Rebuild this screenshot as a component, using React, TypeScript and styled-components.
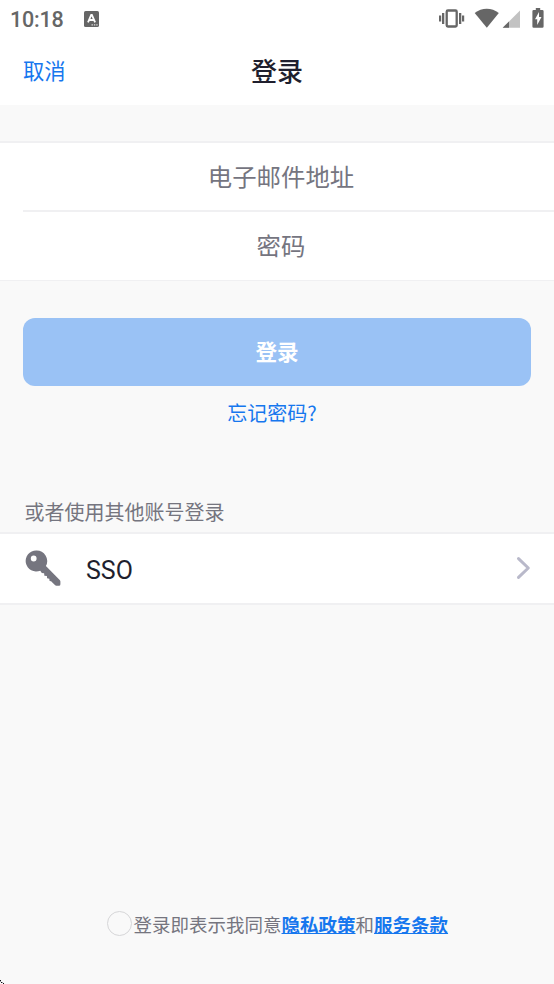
import * as React from 'react'
import styled, { createGlobalStyle } from 'styled-components'

const colors = {
  blue: '#1677ee',
  blueDisabled: '#9ac2f5',
  background: '#f9f9f9',
  border: '#f0f0f2',
  text: '#1f1f2e',
  textLight: '#75757f',
  status: '#666666',
}

const GlobalStyle = createGlobalStyle`
  body {
    margin: 0;
    background: ${colors.background};
    font-family: Roboto, 'Noto Sans CJK SC', sans-serif;
  }
  * {
    box-sizing: border-box;
  }
`

const Screen = styled.div`
  position: relative;
  display: flex;
  flex-direction: column;
  width: 100%;
  height: 984px;
  overflow: hidden;
  background: ${colors.background};
`

const StatusBar = styled.div`
  display: flex;
  align-items: center;
  height: 38px;
  padding: 0 10px 0 9px;
  background: #fff;
  color: ${colors.status};
`

const Clock = styled.span`
  width: 75px;
  padding: 2px 0 0 1px;
  font-size: 21.5px;
  font-weight: 500;
  line-height: 26px;
  letter-spacing: -0.2px;
`

const StatusIcons = styled.div`
  display: flex;
  margin-left: auto;
  padding-bottom: 2px;
`

const Header = styled.header`
  display: grid;
  grid-template-columns: 1fr auto 1fr;
  align-items: center;
  height: 67px;
  padding: 0 23px;
  background: #fff;
`

const CancelButton = styled.button`
  justify-self: start;
  padding: 0;
  border: 0;
  background: none;
  color: ${colors.blue};
  font-family: inherit;
  font-size: 21.3px;
  line-height: 30px;
`

const Title = styled.h1`
  margin: 0;
  color: ${colors.text};
  font-size: 26px;
  font-weight: 500;
  line-height: 36px;
`

const Fields = styled.div`
  margin-top: 36px;
  padding-left: 23px;
  border-top: 2px solid ${colors.border};
  border-bottom: 1px solid ${colors.border};
  background: #fff;
`

const Field = styled.input`
  display: block;
  width: 100%;
  height: 67px;
  padding: 2px 15px 0 0;
  border: 0;
  border-radius: 0;
  outline: none;
  background: #fff;
  color: ${colors.text};
  font-family: inherit;
  font-size: 24.4px;
  text-align: center;

  & + & {
    height: 70px;
    padding-top: 0;
    border-top: 2px solid ${colors.border};
  }

  &::placeholder {
    color: ${colors.textLight};
    opacity: 1;
  }
`

const LoginButton = styled.button`
  height: 68px;
  margin: 37px 23px 0;
  padding: 0 0 4px;
  border: 0;
  border-radius: 12px;
  background: ${colors.blueDisabled};
  color: #fff;
  font-family: inherit;
  font-size: 21.6px;
  font-weight: 700;
`

const ForgotLink = styled.a`
  align-self: center;
  margin: 12px 10px 0 0;
  color: ${colors.blue};
  font-family: 'Noto Sans CJK SC', sans-serif;
  font-size: 20px;
  line-height: 30px;
`

const SectionLabel = styled.div`
  margin-top: 70px;
  padding-left: 24.5px;
  color: ${colors.textLight};
  font-size: 20px;
  line-height: 30px;
`

const AccountRow = styled.div`
  display: flex;
  align-items: center;
  height: 73px;
  margin-top: 4px;
  padding: 0 23px 2px 25px;
  border-top: 2px solid ${colors.border};
  border-bottom: 2px solid ${colors.border};
  background: #fff;
`

const AccountName = styled.span`
  flex: 1;
  padding: 6px 0 0 25px;
  color: ${colors.text};
  font-size: 25px;
  line-height: 30px;
`

const Agreement = styled.footer`
  display: flex;
  align-items: center;
  margin: auto 0 43px 107px;
  color: ${colors.textLight};
  font-size: 18.5px;
  line-height: 30px;
  white-space: nowrap;
`

const Radio = styled.span`
  width: 25px;
  height: 25px;
  margin: 0 1.5px 5px 0;
  border: 1.5px solid #d6d6d8;
  border-radius: 50%;
`

const PolicyLink = styled.a`
  color: ${colors.blue};
  font-weight: 700;
  text-decoration: underline;
  text-decoration-thickness: 1px;
  text-underline-offset: 1px;
`

const CornerMark = styled.svg`
  position: absolute;
  left: 0;
  bottom: 0;
`

const InputMethodIcon = () => (
  <svg width='15' height='16' viewBox='0 0 15 16'>
    <rect width='15' height='16' rx='1.6' fill={colors.status} />
    <path
      d='M4 11.3 7.2 3.9h.7l3.2 7.4M5.2 9h4.7'
      fill='none'
      stroke='#fff'
      strokeWidth='1.8'
    />
    <path d='M7.5 13.2h1.4v1.2H7.5zm2.4 0h1.4v1.2H9.9zm2.4 0h1.3v1.2h-1.3z' fill='#ddd' />
  </svg>
)

const DeviceIcons = () => (
  <svg width='106' height='22' viewBox='438 7 106 22' fill={colors.status}>
    <rect x='446.7' y='10.5' width='10' height='16' rx='1.2' fill='none' stroke={colors.status} strokeWidth='2.3' />
    <path d='M439 15.5h2.2v6H439zm3-2.5h2.3v11H442zm17 0h2.3v11H459zm3 2.5h2.2v6H462z' />
    <path d='M474.7 13.1c7-5.7 17.1-5.7 24.1 0L486.8 27.8z' />
    <path d='M520 10.5v17.3h-17.3z' opacity='.4' />
    <path d='M509 21.4v6.4h-6.3z' />
    <path d='M535.8 8h4.4v2h2.1q1.3 0 1.3 1.3v15.2q0 1.3-1.3 1.3h-8.6q-1.3 0-1.3-1.3V11.3q0-1.3 1.3-1.3h2.1z' />
    <path d='m539 12-4 7.3h2.2v5.6l4.3-7.8h-2.5z' fill='#fff' />
  </svg>
)

const KeyIcon = () => (
  <svg width='36' height='36' viewBox='0 0 36 36' fill={colors.textLight}>
    <path
      fillRule='evenodd'
      d='M11.2.4a10.6 10.6 0 1 0 4.1 20.4l1.5 2.2 2.3.2.3 2.5 2.5.3.2 2.2 2.2.5.3 2.2 1.5.4 3.8 3.8q.6.6 1.5.6h2.5q1.5 0 1.5-1.5v-2.6q0-.8-.7-1.5L20.9 16A10.6 10.6 0 0 0 11.2.4zM8.7 5.6a2.9 2.9 0 1 1 0 5.8 2.9 2.9 0 0 1 0-5.8z'
    />
  </svg>
)

const ChevronIcon = () => (
  <svg width='15' height='24' viewBox='0 0 15 24'>
    <path
      d='M2.5 2.6 12.3 12 2.5 21.4'
      fill='none'
      stroke='#b9b9ca'
      strokeWidth='3'
      strokeLinecap='round'
      strokeLinejoin='round'
    />
  </svg>
)

const App = () => (
  <>
    <GlobalStyle />
    <Screen>
      <StatusBar>
        <Clock>10:18</Clock>
        <InputMethodIcon />
        <StatusIcons>
          <DeviceIcons />
        </StatusIcons>
      </StatusBar>
      <Header>
        <CancelButton>取消</CancelButton>
        <Title>登录</Title>
      </Header>
      <Fields>
        <Field type='email' placeholder='电子邮件地址' />
        <Field type='password' placeholder='密码' />
      </Fields>
      <LoginButton>登录</LoginButton>
      <ForgotLink>忘记密码?</ForgotLink>
      <SectionLabel>或者使用其他账号登录</SectionLabel>
      <AccountRow>
        <KeyIcon />
        <AccountName>SSO</AccountName>
        <ChevronIcon />
      </AccountRow>
      <Agreement>
        <Radio />
        登录即表示我同意
        <PolicyLink>隐私政策</PolicyLink>
        和
        <PolicyLink>服务条款</PolicyLink>
      </Agreement>
      <CornerMark width='4' height='4' viewBox='0 0 4 4'>
        <path d='M0 0h1v1H0zM1 2h1v1H1zM3 3h1v1H3z' fill='#111' />
        <path d='M0 1h1v1H0zM2 2h1v1H2z' fill='#9a9aa5' />
      </CornerMark>
    </Screen>
  </>
)

export default App
